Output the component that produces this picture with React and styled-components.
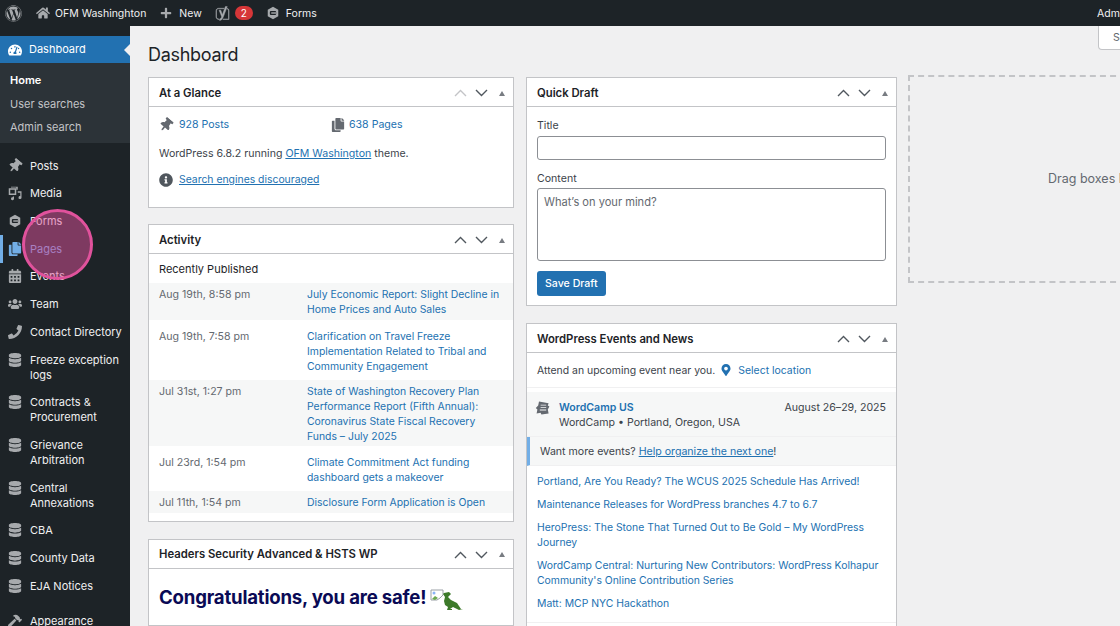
import React from "react";
import styled, { createGlobalStyle } from "styled-components";
import {
  FaWordpress,
  FaHome,
  FaPlus,
  FaYoast,
  FaThumbtack,
  FaCopy,
  FaInfoCircle,
  FaMapMarkerAlt,
  FaTachometerAlt,
  FaCalendarAlt,
  FaUsers,
  FaPhoneAlt,
  FaDatabase,
  FaHammer,
} from "react-icons/fa";

const GlobalStyle = createGlobalStyle`
  html, body {
    margin: 0;
    padding: 0;
    background: #f0f0f1;
    overflow: hidden;
  }
  * { box-sizing: border-box; }
`;

const Page = styled.div`
  position: relative;
  width: 1120px;
  height: 626px;
  overflow: hidden;
  background: #f0f0f1;
  color: #3c434a;
  font-family: Inter, "Liberation Sans", sans-serif;
  font-size: 10.6px;
  line-height: 15px;
`;

const AdminBar = styled.div`
  display: flex;
  align-items: center;
  height: 26px;
  background: #1d2327;
  color: #f0f0f1;
  padding-left: 5px;
  font-size: 10.5px;
  svg { color: #a7aaad; flex: none; }
`;

const BarItem = styled.div`
  display: flex;
  align-items: center;
  gap: ${(p) => p.$gap || 5}px;
  margin-right: ${(p) => p.$mr || 0}px;
  white-space: nowrap;
`;

const Yoast = styled(FaYoast)`
  stroke: currentColor;
  stroke-width: 14px;
`;

const Badge = styled.span`
  display: inline-block;
  width: 18px;
  height: 14px;
  border-radius: 7px;
  background: #d63638;
  color: #fff;
  font-size: 10px;
  line-height: 14px;
  text-align: center;
`;

const BarRight = styled.div`
  margin-left: auto;
  width: 23px;
  overflow: hidden;
  white-space: nowrap;
`;

const Layout = styled.div`
  display: flex;
  height: 600px;
`;

const Sidebar = styled.nav`
  flex: 0 0 130px;
  background: #1d2327;
  padding-top: 10px;
  color: #f0f0f1;
  font-size: 11px;
`;

const CurrentItem = styled.div`
  position: relative;
  display: flex;
  align-items: center;
  gap: 7px;
  height: 27px;
  padding-left: 8px;
  background: #2271b1;
  color: #fff;
  &::after {
    content: "";
    position: absolute;
    right: 0;
    top: 8px;
    border: 6px solid transparent;
    border-right-color: #f0f0f1;
    border-left-width: 0;
  }
`;

const SubMenu = styled.div`
  display: flex;
  flex-direction: column;
  gap: 8.5px;
  padding: 10px 0 8px 10px;
  background: #2c3338;
  color: #c3c4c7;
  margin-bottom: 9.3px;
`;

const SubItem = styled.div`
  color: ${(p) => (p.$active ? "#fff" : "#c3c4c7")};
  font-weight: ${(p) => (p.$active ? 600 : 400)};
`;

const MenuItem = styled.div`
  position: relative;
  display: flex;
  align-items: flex-start;
  padding: 6.4px 0 6.3px 8px;
  margin-bottom: ${(p) => p.$mb || 0}px;
  color: ${(p) => (p.$marked ? "#72aee6" : "#f0f0f1")};
  &::before {
    content: "";
    display: ${(p) => (p.$marked ? "block" : "none")};
    position: absolute;
    left: 0;
    top: 0;
    bottom: 0;
    width: 3px;
    background: #72aee6;
  }
  svg { color: ${(p) => (p.$marked ? "#72aee6" : "#a7aaad")}; flex: none; }
`;

const MenuLabel = styled.span`
  margin-left: ${(p) => 22 - p.$w}px;
  width: 100px;
`;

const Pin = styled(FaThumbtack)`
  transform: rotate(40deg);
`;

const Phone = styled(FaPhoneAlt)`
  transform: scaleX(-1);
`;

const Spotlight = styled.div`
  position: absolute;
  left: 22px;
  top: 209px;
  width: 71px;
  height: 71px;
  border-radius: 50%;
  border: 3.5px solid #e0529c;
  background: rgba(224, 82, 156, 0.5);
`;

const Main = styled.main`
  position: relative;
  flex: 1;
  padding: 0 0 0 18px;
  overflow: hidden;
`;

const ScreenTab = styled.div`
  position: absolute;
  top: 0;
  right: -10px;
  width: 32px;
  height: 24px;
  padding: 4px 0 0 14px;
  background: #fff;
  border: 1px solid #c3c4c7;
  border-top: none;
  border-radius: 0 0 0 4px;
  color: #646970;
  overflow: hidden;
`;

const Title = styled.h1`
  margin: 0;
  padding: 17px 0 11px;
  height: 51px;
  font-size: 18px;
  line-height: 23px;
  font-weight: 400;
  letter-spacing: -0.3px;
  color: #1d2327;
`;

const Columns = styled.div`
  display: flex;
  align-items: flex-start;
`;

const Column = styled.div`
  flex: none;
  width: ${(p) => p.$w}px;
  margin-right: ${(p) => p.$mr || 0}px;
`;

const Box = styled.section`
  background: #fff;
  border: 1px solid #c3c4c7;
  margin-bottom: ${(p) => p.$mb || 0}px;
  height: ${(p) => (p.$h ? `${p.$h}px` : "auto")};
`;

const BoxHead = styled.div`
  display: flex;
  align-items: center;
  justify-content: space-between;
  height: 29px;
  padding: 2px 8px 0 10px;
  border-bottom: 1px solid #c3c4c7;
  color: #1d2327;
  font-size: 11.3px;
  font-weight: 600;
`;

const Handles = styled.div`
  display: flex;
  align-items: center;
  gap: 8px;
`;

const ChevronSvg = styled.svg`
  flex: none;
  color: ${(p) => (p.$dim ? "#c3c4c7" : "#50575e")};
  transform: ${(p) => (p.$down ? "rotate(180deg)" : "none")};
`;

const Arrow = styled.span`
  width: 0;
  height: 0;
  margin-left: 3px;
  border: 3.5px solid transparent;
  border-top: none;
  border-bottom: 5px solid #787c82;
`;

const A = styled.a`
  color: #2271b1;
  text-decoration: ${(p) => (p.$u ? "underline" : "none")};
  font-weight: ${(p) => (p.$b ? 600 : 400)};
`;

const GlanceBody = styled.div`
  padding: 10px 10px 0;
`;

const GlanceRow = styled.div`
  display: flex;
  align-items: center;
  margin-bottom: ${(p) => p.$mb || 0}px;
`;

const GlanceCell = styled.div`
  display: flex;
  align-items: center;
  gap: ${(p) => p.$gap}px;
  width: 174px;
  svg { color: #646970; }
`;

const IconRow = styled.div`
  display: flex;
  align-items: center;
  gap: 6px;
  font-size: 10.4px;
  svg { color: #50575e; }
`;

const Recent = styled.div`
  padding: 7.5px 10px 6.5px;
  color: #1d2327;
  font-size: 11px;
`;

const ActivityRow = styled.div`
  display: flex;
  padding: ${(p) => (p.$odd ? "4px 10px 2.5px" : "9px 10px 6px")};
  background: ${(p) => (p.$odd ? "#f6f7f7" : "#fff")};
`;

const ActivityList = styled.div`
  margin-bottom: 8px;
`;

const ActDate = styled.div`
  flex: 0 0 148px;
  color: #646970;
`;

const ActLink = styled(A)`
  flex: 1;
  font-size: 10.4px;
`;

const Safe = styled.div`
  display: flex;
  align-items: center;
  gap: 4px;
  padding: 13px 10px;
  color: #0a0a55;
  font-size: 18.6px;
  line-height: 30px;
  font-weight: 700;
  letter-spacing: -0.2px;
  white-space: nowrap;
  svg { margin-top: 6px; flex: none; }
`;

const Form = styled.div`
  padding: 11px 10px 9px;
`;

const Label = styled.div`
  margin-bottom: ${(p) => p.$mb || 3}px;
  color: #3c434a;
`;

const Input = styled.div`
  height: 24px;
  margin-bottom: 11px;
  background: #fff;
  border: 1px solid #8c8f94;
  border-radius: 3px;
`;

const TextArea = styled.div`
  height: 73px;
  margin-bottom: 10px;
  padding: 6px 6px;
  background: #fff;
  border: 1px solid #8c8f94;
  border-radius: 3px;
  color: #646970;
  font-size: 11.1px;
`;

const SaveButton = styled.div`
  display: inline-block;
  height: 25px;
  padding: 0 8px;
  background: #2271b1;
  border-radius: 3px;
  color: #fff;
  font-weight: 500;
  line-height: 25px;
`;

const Attend = styled.div`
  display: flex;
  align-items: center;
  height: 35px;
  padding: 0 10px;
  border-bottom: 1px solid #f0f0f1;
  font-size: 10.45px;
  white-space: nowrap;
  svg { color: #2271b1; margin: 0 6px 0 5px; flex: none; }
`;

const EventRow = styled.div`
  display: flex;
  align-items: flex-start;
  padding: 7.5px 10px 6.5px 8px;
  margin-top: 4px;
  background: #f6f7f7;
  border-bottom: 1px solid #f0f0f1;
`;

const EventInfo = styled.div`
  flex: 1;
  margin-left: 8px;
`;

const MoreEvents = styled.div`
  padding: 6.5px 10px 6.5px 10px;
  background: #f6f7f7;
  border-left: 3px solid #72aee6;
  border-bottom: 1px solid #f0f0f1;
  color: #3c434a;
`;

const NewsList = styled.div`
  display: flex;
  flex-direction: column;
  gap: 8px;
  padding: 8px 10px 11px;
  border-bottom: 1px solid #f0f0f1;
  font-size: 10.4px;
`;

const BoxFoot = styled.div`
  height: 30px;
`;

const Dashed = styled.div`
  flex: none;
  margin-top: -2px;
  width: 400px;
  height: 208px;
  padding-top: 94px;
  padding-left: 138px;
  border: 2px dashed #c3c4c7;
  color: #646970;
  font-size: 12.5px;
  white-space: nowrap;
`;

const Chevron = ({ down, dim }) => (
  <ChevronSvg $down={down} $dim={dim} width="13" height="8" viewBox="0 0 13 8">
    <path d="M1 7l5.5-5.5L12 7" fill="none" stroke="currentColor" strokeWidth="1.4" />
  </ChevronSvg>
);

const FormsIcon = ({ size = 14 }) => (
  <svg width={size} height={size} viewBox="0 0 20 20">
    <path fill="#a7aaad" d="M10 1l7.5 4.3v9.4L10 19l-7.5-4.3V5.3z" />
    <rect x="5.5" y="7" width="9" height="6" rx="1.5" fill="#1d2327" />
    <rect x="7.5" y="9" width="7" height="2" fill="#a7aaad" />
  </svg>
);

const MediaIcon = ({ size = 15 }) => (
  <svg width={size} height={size} viewBox="0 0 20 20" fill="#a7aaad">
    <path d="M2 2h9v3h2V1H4v1z" />
    <path fillRule="evenodd" d="M1 3h10v9H1zM3 5v5h6V5z" />
    <path d="M13 7h5v8.5a2 2 0 1 1-1.6-2V9h-3.4z" />
    <path d="M8 14v3a2 2 0 1 1-1.6-2V14z" />
  </svg>
);

const WordCampIcon = () => (
  <svg width="16" height="16" viewBox="0 0 20 20" fill="#646970">
    <path d="M5 2l12 2-1 3 2 1-2 4 1 5-9 1-1-2-5 1 1-5-2-2 3-3z" />
    <path d="M7 6h7v1H7zM7 9h7v1H7zM6 12h8v1H6z" fill="#f6f7f7" />
  </svg>
);

const BrokenDino = () => (
  <svg width="36" height="22" viewBox="0 0 36 22">
    <path d="M1 1h12v5l-3 3-3 2H1z" fill="#fff" stroke="#9aa0a6" strokeWidth="1" />
    <path d="M2 10l3-3 3 2-3 2z" fill="#6aa84f" />
    <circle cx="4" cy="4" r="1.5" fill="#8ab4f8" />
    <path
      fill="#3d7a2a"
      d="M14 4l5-1 2 2-2 2-1 1 3 3 6 3 4 6h2l-4 1-6-3-3 2h2v1h-5l1-3-3-2-1-4 1-4-2-3z"
    />
  </svg>
);

const boxHandles = (dim) => (
  <Handles>
    <Chevron dim={dim} />
    <Chevron down />
    <Arrow />
  </Handles>
);

const dbIcon = <FaDatabase size={14} />;

const menu = [
  { label: "Posts", icon: <Pin size={14} />, w: 14 },
  { label: "Media", icon: <MediaIcon />, w: 15 },
  { label: "Forms", icon: <FormsIcon />, w: 14 },
  { label: "Pages", icon: <FaCopy size={14} />, w: 14, marked: true },
  { label: "Events", icon: <FaCalendarAlt size={14} />, w: 14 },
  { label: "Team", icon: <FaUsers size={14} />, w: 14 },
  { label: "Contact Directory", icon: <Phone size={14} />, w: 14 },
  { label: "Freeze exception logs", icon: dbIcon, w: 14 },
  { label: "Contracts & Procurement", icon: dbIcon, w: 14 },
  { label: "Grievance Arbitration", icon: dbIcon, w: 14 },
  { label: "Central Annexations", icon: dbIcon, w: 14 },
  { label: "CBA", icon: dbIcon, w: 14 },
  { label: "County Data", icon: dbIcon, w: 14 },
  { label: "EJA Notices", icon: dbIcon, w: 14, mb: 8 },
  { label: "Appearance", icon: <FaHammer size={14} />, w: 14 },
];

const activity = [
  ["Aug 19th, 8:58 pm", "July Economic Report: Slight Decline in Home Prices and Auto Sales"],
  ["Aug 19th, 7:58 pm", "Clarification on Travel Freeze Implementation Related to Tribal and Community Engagement"],
  ["Jul 31st, 1:27 pm", "State of Washington Recovery Plan Performance Report (Fifth Annual): Coronavirus State Fiscal Recovery Funds – July 2025"],
  ["Jul 23rd, 1:54 pm", "Climate Commitment Act funding dashboard gets a makeover"],
  ["Jul 11th, 1:54 pm", "Disclosure Form Application is Open"],
];

const news = [
  "Portland, Are You Ready? The WCUS 2025 Schedule Has Arrived!",
  "Maintenance Releases for WordPress branches 4.7 to 6.7",
  "HeroPress: The Stone That Turned Out to Be Gold – My WordPress Journey",
  "WordCamp Central: Nurturing New Contributors: WordPress Kolhapur Community's Online Contribution Series",
  "Matt: MCP NYC Hackathon",
];

export default function App() {
  return (
    <Page>
      <GlobalStyle />
      <AdminBar>
        <BarItem $mr={14}>
          <FaWordpress size={17} />
        </BarItem>
        <BarItem $mr={14}>
          <FaHome size={14} />
          OFM Washinghton
        </BarItem>
        <BarItem $mr={13} $gap={7}>
          <FaPlus size={12} />
          New
        </BarItem>
        <BarItem $mr={13}>
          <Yoast size={15} />
          <Badge>2</Badge>
        </BarItem>
        <BarItem $gap={6}>
          <FormsIcon />
          Forms
        </BarItem>
        <BarRight>Admin</BarRight>
      </AdminBar>
      <Layout>
        <Sidebar>
          <CurrentItem>
            <FaTachometerAlt size={14} />
            Dashboard
          </CurrentItem>
          <SubMenu>
            <SubItem $active>Home</SubItem>
            <SubItem>User searches</SubItem>
            <SubItem>Admin search</SubItem>
          </SubMenu>
          {menu.map((m) => (
            <MenuItem key={m.label} $marked={m.marked} $mb={m.mb}>
              {m.icon}
              <MenuLabel $w={m.w}>{m.label}</MenuLabel>
            </MenuItem>
          ))}
        </Sidebar>
        <Main>
          <ScreenTab>Screen</ScreenTab>
          <Title>Dashboard</Title>
          <Columns>
            <Column $w={366} $mr={12}>
              <Box $mb={16} $h={131}>
                <BoxHead>
                  At a Glance
                  {boxHandles(true)}
                </BoxHead>
                <GlanceBody>
                  <GlanceRow $mb={14}>
                    <GlanceCell $gap={6}>
                      <Pin size={14} />
                      <A>928 Posts</A>
                    </GlanceCell>
                    <GlanceCell $gap={4}>
                      <FaCopy size={14} />
                      <A>638 Pages</A>
                    </GlanceCell>
                  </GlanceRow>
                  <GlanceRow $mb={11}>
                    <span>
                      WordPress 6.8.2 running <A $u>OFM Washington</A> theme.
                    </span>
                  </GlanceRow>
                  <IconRow>
                    <FaInfoCircle size={14} />
                    <A $u>Search engines discouraged</A>
                  </IconRow>
                </GlanceBody>
              </Box>
              <Box $mb={17}>
                <BoxHead>
                  Activity
                  {boxHandles()}
                </BoxHead>
                <Recent>Recently Published</Recent>
                <ActivityList>
                  {activity.map(([date, title], i) => (
                    <ActivityRow key={date} $odd={i % 2 === 0}>
                      <ActDate>{date}</ActDate>
                      <ActLink>{title}</ActLink>
                    </ActivityRow>
                  ))}
                </ActivityList>
              </Box>
              <Box>
                <BoxHead>
                  Headers Security Advanced &amp; HSTS WP
                  {boxHandles()}
                </BoxHead>
                <Safe>
                  Congratulations, you are safe!
                  <BrokenDino />
                </Safe>
              </Box>
            </Column>
            <Column $w={371} $mr={11}>
              <Box $mb={17}>
                <BoxHead>
                  Quick Draft
                  {boxHandles()}
                </BoxHead>
                <Form>
                  <Label>Title</Label>
                  <Input />
                  <Label $mb={2}>Content</Label>
                  <TextArea>What’s on your mind?</TextArea>
                  <SaveButton>Save Draft</SaveButton>
                </Form>
              </Box>
              <Box>
                <BoxHead>
                  WordPress Events and News
                  {boxHandles()}
                </BoxHead>
                <Attend>
                  Attend an upcoming event near you.
                  <FaMapMarkerAlt size={12} />
                  <A>Select location</A>
                </Attend>
                <EventRow>
                  <WordCampIcon />
                  <EventInfo>
                    <A $b>WordCamp US</A>
                    <div>WordCamp • Portland, Oregon, USA</div>
                  </EventInfo>
                  August 26–29, 2025
                </EventRow>
                <MoreEvents>
                  Want more events? <A $u>Help organize the next one</A>!
                </MoreEvents>
                <NewsList>
                  {news.map((n) => (
                    <A key={n}>{n}</A>
                  ))}
                </NewsList>
                <BoxFoot />
              </Box>
            </Column>
            <Dashed>Drag boxes here</Dashed>
          </Columns>
        </Main>
      </Layout>
      <Spotlight />
    </Page>
  );
}
